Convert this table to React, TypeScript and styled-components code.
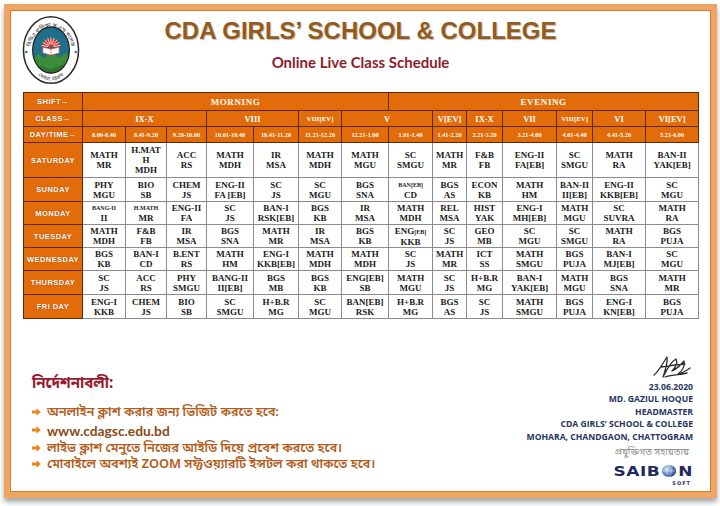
import React from 'react';
import styled, { createGlobalStyle } from 'styled-components';

const GlobalStyle = createGlobalStyle`
  html, body { margin: 0; padding: 0; background: #ffffff; }
  body {
    width: 720px;
    height: 506px;
    overflow: hidden;
    font-family: "Liberation Sans", Arial, sans-serif;
  }
`;

const ORANGE = '#e36c0a';

const times = [
  '8.00-8.40', '8.41-9.20', '9.20-10.00', '10.01-10.40', '10.41-11.20', '11.21-12.20', '12.21-1.00',
  '1.01-1.40', '1.41-2.20', '2.21-3.20', '3.21-4.00', '4.01-4.40', '4.41-5.20', '5.21-6.00',
];

const colWidths = [43, 41, 40, 47, 45, 43, 47, 44, 34, 36, 54, 36, 53, 53];

const classes: { name: string; span: number; size: number }[] = [
  { name: 'IX-X', span: 3, size: 8.5 },
  { name: 'VIII', span: 2, size: 8.5 },
  { name: 'VIII[EV]', span: 1, size: 6.8 },
  { name: 'V', span: 2, size: 8.5 },
  { name: 'V[EV]', span: 1, size: 8.5 },
  { name: 'IX-X', span: 1, size: 8.5 },
  { name: 'VII', span: 1, size: 8.5 },
  { name: 'VIII[EV]', span: 1, size: 6.8 },
  { name: 'VI', span: 1, size: 8.5 },
  { name: 'VI[EV]', span: 1, size: 8.5 },
];

// "|" splits lines, "~" marks a small line, "{..}" marks a small tail
const rows: { day: string; h: number; slots: string[] }[] = [
  { day: 'SATURDAY', h: 35, slots: ['MATH|MR', 'H.MAT|H|MDH', 'ACC|RS', 'MATH|MDH', 'IR|MSA', 'MATH|MDH', 'MATH|MGU', 'SC|SMGU', 'MATH|MR', 'F&B|FB', 'ENG-II|FA[EB]', 'SC|SMGU', 'MATH|RA', 'BAN-II|YAK[EB]'] },
  { day: 'SUNDAY', h: 24, slots: ['PHY|MGU', 'BIO|SB', 'CHEM|JS', 'ENG-II|FA [EB]', 'SC|JS', 'SC|MGU', 'BGS|SNA', '~BAN[EB]|CD', 'BGS|AS', 'ECON|KB', 'MATH|HM', 'BAN-II|II[EB]', 'ENG-II|KKB[EB]', 'SC|MGU'] },
  { day: 'MONDAY', h: 23, slots: ['~BANG-II|II', '~H.MATH|MR', 'ENG-II|FA', 'SC|JS', 'BAN-I|RSK[EB]', 'BGS|KB', 'IR|MSA', 'MATH|MDH', 'REL|MSA', 'HIST|YAK', 'ENG-I|MH[EB]', 'MATH|MGU', 'SC|SUVRA', 'MATH|RA'] },
  { day: 'TUESDAY', h: 23, slots: ['MATH|MDH', 'F&B|FB', 'IR|MSA', 'BGS|SNA', 'MATH|MR', 'IR|MSA', 'BGS|KB', 'ENG{[EB]}|KKB', 'SC|JS', 'GEO|MB', 'SC|MGU', 'SC|SMGU', 'MATH|RA', 'BGS|PUJA'] },
  { day: 'WEDNESDAY', h: 23, slots: ['BGS|KB', 'BAN-I|CD', 'B.ENT|RS', 'MATH|HM', 'ENG-I|KKB[EB]', 'MATH|MDH', 'MATH|MDH', 'SC|JS', 'MATH|MR', 'ICT|SS', 'MATH|SMGU', 'BGS|PUJA', 'BAN-I|MJ[EB]', 'SC|MGU'] },
  { day: 'THURSDAY', h: 24, slots: ['SC|JS', 'ACC|RS', 'PHY|SMGU', 'BANG-II|II[EB]', 'BGS|MB', 'BGS|KB', 'ENG[EB]|SB', 'MATH|MGU', 'SC|JS', 'H+B.R|MG', 'BAN-I|YAK[EB]', 'MATH|MGU', 'BGS|SNA', 'MATH|MR'] },
  { day: 'FRI DAY', h: 24, slots: ['ENG-I|KKB', 'CHEM|JS', 'BIO|SB', 'SC|SMGU', 'H+B.R|MG', 'SC|MGU', 'BAN[EB]|RSK', 'H+B.R|MG', 'BGS|AS', 'SC|JS', 'MATH|SMGU', 'BGS|PUJA', 'ENG-I|KN[EB]', 'BGS|PUJA'] },
];

const Frame = styled.div`
  box-sizing: border-box;
  margin: 4px 0 0 4px;
  width: 713px;
  height: 494px;
  border: 6px solid #efa564;
  box-shadow: inset 0 0 0 1px #dc7d2c, 0 4px 5px rgba(0, 0, 0, 0.35);
  background: #ffffff;
  display: flex;
  flex-direction: column;
`;

const Header = styled.header`
  display: grid;
  grid-template-columns: 80px 1fr 80px;
  height: 82px;
`;

const LogoBox = styled.div`
  padding: 4px 0 0 12px;
`;

const TitleBlock = styled.div`
  display: flex;
  flex-direction: column;
  align-items: center;
  padding-top: 7px;
`;

const Title = styled.h1`
  margin: 0;
  font-family: "Liberation Sans", Arial, sans-serif;
  font-size: 24px;
  line-height: 28px;
  font-weight: 700;
  color: #935a1e;
  text-shadow: 1px 1px 1px rgba(90, 50, 10, 0.35);
  white-space: nowrap;
`;

const Subtitle = styled.h2`
  margin: 8px 0 0;
  font-family: Lato, "Open Sans", sans-serif;
  font-size: 15px;
  line-height: 18px;
  font-weight: 700;
  color: #8e1c2e;
`;

const Schedule = styled.table`
  margin-left: 13px;
  width: 675px;
  border-collapse: collapse;
  table-layout: fixed;
  font-family: "Liberation Serif", "Times New Roman", serif;
`;

const Row = styled.tr<{ $h: number }>`
  height: ${(p) => p.$h}px;
`;

const LabelCell = styled.th`
  background: ${ORANGE};
  color: #ffffff;
  border: 1px solid #5c2806;
  font-family: "Liberation Sans", Arial, sans-serif;
  font-size: 7.5px;
  font-weight: 700;
  letter-spacing: 0.45px;
  text-align: center;
  padding: 0;
  white-space: nowrap;
  text-shadow: 0 0 1px rgba(110, 40, 0, 0.7);
`;

const BandCell = styled.th<{ $size: number; $spacing?: number }>`
  background: ${ORANGE};
  color: #ffffff;
  border: 1px solid #5c2806;
  font-size: ${(p) => p.$size}px;
  letter-spacing: ${(p) => p.$spacing ?? 0}px;
  font-weight: 700;
  text-align: center;
  padding: 0;
  white-space: nowrap;
  overflow: hidden;
`;

const SlotCell = styled.td`
  border: 1px solid #8c8c8c;
  background: #ffffff;
  color: #1b1b1b;
  font-size: 9px;
  font-weight: 700;
  line-height: 10px;
  text-align: center;
  vertical-align: middle;
  padding: 0;
  white-space: nowrap;
  overflow: hidden;
`;

const SlotLine = styled.span<{ $small?: boolean }>`
  display: block;
  font-size: ${(p) => (p.$small ? '6px' : '9px')};
`;

const Tiny = styled.span`
  font-size: 6px;
`;

const Bottom = styled.section`
  flex: 1;
  display: flex;
  justify-content: space-between;
  padding: 0 18px 0 22px;
`;

const Notes = styled.div`
  padding-top: 56px;
  font-family: "Noto Sans Bengali", "Noto Sans", "Open Sans", sans-serif;
`;

const NotesTitle = styled.div`
  font-size: 15px;
  line-height: 18px;
  font-weight: 700;
  color: #981b2f;
`;

const NoteList = styled.ul`
  list-style: none;
  margin: 11px 0 0;
  padding: 0;
`;

const NoteItem = styled.li<{ $web?: boolean }>`
  display: flex;
  align-items: center;
  gap: 6px;
  height: ${(p) => (p.$web ? 20 : 16)}px;
  font-size: ${(p) => (p.$web ? '13.8px' : '12.8px')};
  font-family: ${(p) => (p.$web ? 'Lato, "Open Sans", sans-serif' : 'inherit')};
  font-weight: ${(p) => (p.$web ? 700 : 600)};
  color: ${(p) => (p.$web ? '#8d4a16' : '#b25d1c')};
  white-space: nowrap;
`;

const Sign = styled.div`
  padding-top: 34px;
  display: flex;
  flex-direction: column;
  align-items: flex-end;
`;

const SignLine = styled.div`
  font-family: "Open Sans", "Liberation Sans", sans-serif;
  font-size: 8.6px;
  line-height: 12.4px;
  font-weight: 700;
  color: #263563;
  white-space: nowrap;
`;

const Credit = styled.div`
  margin-top: 3px;
  font-family: "Noto Sans Bengali", "Noto Sans", sans-serif;
  font-size: 9.5px;
  line-height: 14px;
  color: #8a8a8a;
  padding-right: 4px;
`;

const Brand = styled.div`
  display: flex;
  flex-direction: column;
  align-items: flex-end;
  margin-top: 2px;
`;

const BrandWord = styled.div`
  display: flex;
  align-items: center;
  font-family: "DejaVu Sans", "Liberation Sans", sans-serif;
  font-size: 17px;
  line-height: 18px;
  font-weight: 700;
  letter-spacing: 0.5px;
  color: #1f2a60;
  transform: scaleY(0.85);
`;

const BrandSub = styled.div`
  font-family: "DejaVu Sans", sans-serif;
  font-size: 5px;
  line-height: 6px;
  font-weight: 700;
  letter-spacing: 1px;
  color: #1f2a60;
  margin-right: 2px;
`;

const Logo = () => (
  <svg width="58" height="72" viewBox="0 0 60 72">
    <defs>
      <clipPath id="inner">
        <ellipse cx="30" cy="36" rx="19" ry="24" />
      </clipPath>
      <path id="arcTop" d="M8 40 A22 28 0 0 1 52 40" />
      <path id="arcBot" d="M14 58 A20 24 0 0 0 46 58" />
    </defs>
    <ellipse cx="30" cy="36" rx="28.5" ry="34.5" fill="#fff" stroke="#2b2b2b" strokeWidth="1.6" />
    <text fontSize="5.5" fill="#333" fontFamily="'Noto Sans Bengali', sans-serif">
      <textPath href="#arcTop" startOffset="50%" textAnchor="middle">সিডিএ বালিকা স্কুল এন্ড কলেজ</textPath>
    </text>
    <text fontSize="5" fill="#333" fontFamily="'Noto Sans Bengali', sans-serif">
      <textPath href="#arcBot" startOffset="50%" textAnchor="middle">মোহরা, চট্টগ্রাম</textPath>
    </text>
    <circle cx="4.5" cy="38" r="1.3" fill="#3a6e8c" />
    <circle cx="55.5" cy="38" r="1.3" fill="#3a6e8c" />
    <g clipPath="url(#inner)">
      <rect x="0" y="0" width="60" height="72" fill="#1f6e8a" />
      <path d="M8 50 L17 40 L23 45 L30 37 L38 44 L45 39 L54 47 L54 72 L8 72 Z" fill="#3c8d3a" />
      <path d="M8 58 L20 52 L30 56 L42 51 L54 56 L54 72 L8 72 Z" fill="#2f7431" />
      <path d="M26 62 L34 60 L33 64 L27 65 Z" fill="#d9eef2" />
      <path d="M21 33 A9 9 0 0 1 39 33 Z" fill="#d8302a" />
      {[...Array(9)].map((_, i) => {
        const a = Math.PI + (Math.PI * (i + 0.5)) / 9;
        return (
          <line
            key={i}
            x1={30 + Math.cos(a) * 3}
            y1={33 + Math.sin(a) * 3}
            x2={30 + Math.cos(a) * 10}
            y2={33 + Math.sin(a) * 10}
            stroke="#fff"
            strokeWidth="0.8"
          />
        );
      })}
      <path d="M21.5 33 L30 35 L38.5 33 L38.5 39 L30 41.5 L21.5 39 Z" fill="#fff" stroke="#c23a30" strokeWidth="0.7" />
      <line x1="30" y1="35" x2="30" y2="41.5" stroke="#c23a30" strokeWidth="0.6" />
    </g>
    <ellipse cx="30" cy="36" rx="19" ry="24" fill="none" stroke="#1d1d1d" strokeWidth="1.2" />
  </svg>
);

const Signature = () => (
  <svg width="42" height="28" viewBox="0 0 42 28">
    <path
      d="M3 22 C8 18 12 10 16 4 C17 10 14 18 12 24 C16 16 21 8 25 6 C27 10 24 15 21 18 C25 16 30 12 33 8 C34 13 31 18 27 21 C32 20 36 17 39 15 M10 14 C16 13 24 12 34 11 M14 24 C20 22 28 22 36 20"
      fill="none"
      stroke="#2a2a2a"
      strokeWidth="1.3"
      strokeLinecap="round"
      strokeLinejoin="round"
    />
  </svg>
);

const Bullet = () => (
  <svg width="9" height="8" viewBox="0 0 9 8">
    <path d="M0 2.5 L4.5 2.5 L4.5 0.3 L8.8 4 L4.5 7.7 L4.5 5.5 L0 5.5 Z" fill="#e8861d" />
  </svg>
);

const Globe = () => (
  <svg width="16" height="16" viewBox="0 0 16 16" style={{ margin: '0 1px' }}>
    <defs>
      <radialGradient id="glb" cx="35%" cy="35%" r="70%">
        <stop offset="0%" stopColor="#d6e3f5" />
        <stop offset="55%" stopColor="#6b8fc8" />
        <stop offset="100%" stopColor="#24396f" />
      </radialGradient>
    </defs>
    <circle cx="8" cy="8" r="7.2" fill="url(#glb)" />
    <path d="M1.5 8 H14.5 M8 1 C5 4 5 12 8 15 M8 1 C11 4 11 12 8 15" stroke="#e8eef8" strokeWidth="0.5" fill="none" />
  </svg>
);

const SlotText = ({ text }: { text: string }) => (
  <>
    {text.split('|').map((line, i) => {
      const small = line.startsWith('~');
      const body = small ? line.slice(1) : line;
      const m = body.match(/^(.*)\{(.*)\}$/);
      return (
        <SlotLine key={i} $small={small}>
          {m ? (
            <>
              {m[1]}
              <Tiny>{m[2]}</Tiny>
            </>
          ) : (
            body
          )}
        </SlotLine>
      );
    })}
  </>
);

export default function App() {
  return (
    <>
      <GlobalStyle />
      <Frame>
        <Header>
          <LogoBox>
            <Logo />
          </LogoBox>
          <TitleBlock>
            <Title>CDA GIRLS’ SCHOOL &amp; COLLEGE</Title>
            <Subtitle>Online Live Class Schedule</Subtitle>
          </TitleBlock>
          <div />
        </Header>

        <Schedule>
          <colgroup>
            <col style={{ width: 59 }} />
            {colWidths.map((w, i) => (
              <col key={i} style={{ width: w }} />
            ))}
          </colgroup>
          <thead>
            <Row $h={18}>
              <LabelCell>SHIFT→</LabelCell>
              <BandCell colSpan={7} $size={9} $spacing={0.6}>MORNING</BandCell>
              <BandCell colSpan={7} $size={9} $spacing={0.6}>EVENING</BandCell>
            </Row>
            <Row $h={16}>
              <LabelCell>CLASS→</LabelCell>
              {classes.map((c, i) => (
                <BandCell key={i} colSpan={c.span} $size={c.size}>
                  {c.name}
                </BandCell>
              ))}
            </Row>
            <Row $h={16}>
              <LabelCell>DAY/TIME→</LabelCell>
              {times.map((t) => (
                <BandCell key={t} $size={6.3}>
                  {t}
                </BandCell>
              ))}
            </Row>
          </thead>
          <tbody>
            {rows.map((r) => (
              <Row key={r.day} $h={r.h}>
                <LabelCell>{r.day}</LabelCell>
                {r.slots.map((s, i) => (
                  <SlotCell key={i}>
                    <SlotText text={s} />
                  </SlotCell>
                ))}
              </Row>
            ))}
          </tbody>
        </Schedule>

        <Bottom>
          <Notes>
            <NotesTitle>নির্দেশনাবলী:</NotesTitle>
            <NoteList>
              <NoteItem>
                <Bullet />
                অনলাইন ক্লাশ করার জন্য ভিজিট করতে হবে:
              </NoteItem>
              <NoteItem $web>
                <Bullet />
                www.cdagsc.edu.bd
              </NoteItem>
              <NoteItem>
                <Bullet />
                লাইভ ক্লাশ মেনুতে নিজের আইডি দিয়ে প্রবেশ করতে হবে।
              </NoteItem>
              <NoteItem>
                <Bullet />
                মোবাইলে অবশ্যই ZOOM সফ্টওয়্যারটি ইন্সটল করা থাকতে হবে।
              </NoteItem>
            </NoteList>
          </Notes>

          <Sign>
            <Signature />
            <SignLine>23.06.2020</SignLine>
            <SignLine>MD. GAZIUL HOQUE</SignLine>
            <SignLine>HEADMASTER</SignLine>
            <SignLine>CDA GIRLS’ SCHOOL &amp; COLLEGE</SignLine>
            <SignLine>MOHARA, CHANDGAON, CHATTOGRAM</SignLine>
            <Credit>প্রযুক্তিগত সহায়তায়</Credit>
            <Brand>
              <BrandWord>
                SAIB
                <Globe />N
              </BrandWord>
              <BrandSub>SOFT</BrandSub>
            </Brand>
          </Sign>
        </Bottom>
      </Frame>
    </>
  );
}
